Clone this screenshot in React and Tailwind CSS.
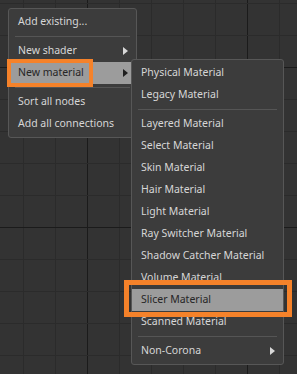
import React from 'react';

const font = { fontFamily: '"Segoe UI", "Noto Sans", "Open Sans", sans-serif' };

function Arrow({ dark }) {
    return (
        <svg width="5" height="8" viewBox="0 0 5 8" className="shrink-0">
            <path d="M0 0 L5 4 L0 8 Z" fill={dark ? '#1e1e1e' : '#d8d8d8'} />
        </svg>
    );
}

function Item({ label, sub, active }) {
    return (
        <div
            className={`h-[22px] flex items-center justify-between pl-[9px] pr-[8px] whitespace-nowrap ${
                active ? 'bg-[#9c9c9c] text-[#262626]' : 'text-[#d6d6d6]'
            }`}
        >
            <span>{label}</span>
            {sub && <Arrow dark={active} />}
        </div>
    );
}

function Sep() {
    return (
        <div className="h-[7px] flex items-center px-[6px]">
            <div className="h-px w-full bg-[#555555]" />
        </div>
    );
}

function Grid() {
    const xs = [];
    for (let x = 23.5; x < 297; x += 32) xs.push(x);
    const ys = [];
    for (let y = 3.5; y < 374; y += 32) ys.push(y);
    return (
        <svg className="absolute inset-0" width="297" height="374">
            {xs.map((x) => (
                <line key={'x' + x} x1={x} y1="0" x2={x} y2="374" stroke={x === 87.5 || x === 247.5 ? '#1b1b1b' : '#2b2b2b'} strokeWidth="1" />
            ))}
            {ys.map((y) => (
                <line key={'y' + y} x1="0" y1={y} x2="297" y2={y} stroke={y === 67.5 || y === 227.5 ? '#1b1b1b' : '#2b2b2b'} strokeWidth="1" />
            ))}
        </svg>
    );
}

export default function App() {
    return (
        <div className="relative w-[297px] h-[374px] overflow-hidden bg-[#333333] text-[10.5px]" style={font}>
            <Grid />

            <div className="absolute left-[8px] top-[8px] w-[129px] py-[2px] bg-[#3c3c3c] border border-[#575757] rounded-[3px]">
                <Item label="Add existing..." />
                <Sep />
                <Item label="New shader" sub />
                <Item label="New material" sub active />
                <Sep />
                <Item label="Sort all nodes" />
                <Item label="Add all connections" />
            </div>

            <div className="absolute left-[131px] top-[59px] w-[153px] py-[2px] bg-[#3c3c3c] border border-[#575757] rounded-[3px]">
                <Item label="Physical Material" />
                <Item label="Legacy Material" />
                <Sep />
                <Item label="Layered Material" />
                <Item label="Select Material" />
                <Item label="Skin Material" />
                <Item label="Hair Material" />
                <Item label="Light Material" />
                <Item label="Ray Switcher Material" />
                <Item label="Shadow Catcher Material" />
                <Item label="Volume Material" />
                <Item label="Slicer Material" active />
                <Item label="Scanned Material" />
                <Sep />
                <Item label="Non-Corona" sub />
            </div>

            <div className="absolute left-[7px] top-[59px] w-[86px] h-[28px] border-[4px] border-[#f5822a]" />
            <div className="absolute left-[124px] top-[280px] w-[168px] h-[37px] border-[5px] border-[#f5822a]" />
        </div>
    );
}
